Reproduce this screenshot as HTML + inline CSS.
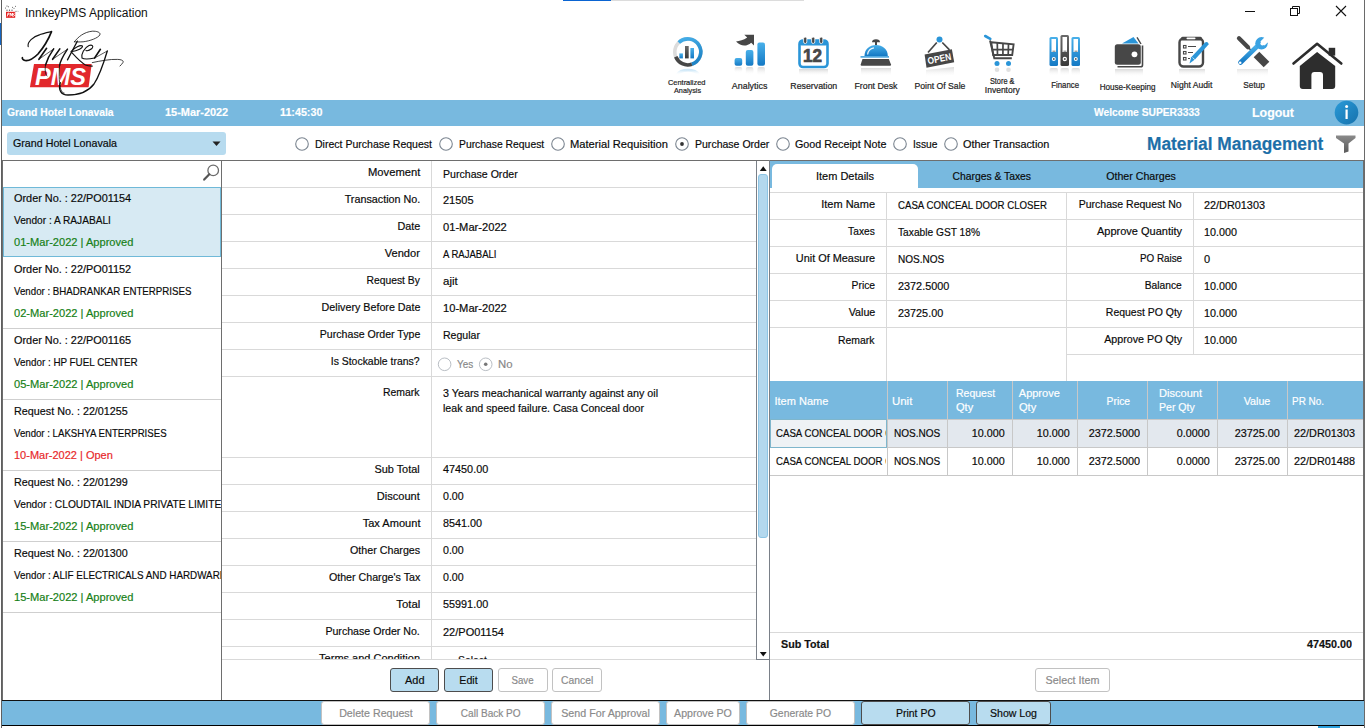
<!DOCTYPE html><html><head><meta charset="utf-8"><style>
html,body{margin:0;padding:0;}
body{width:1366px;height:728px;position:relative;overflow:hidden;background:#fff;font-family:"Liberation Sans",sans-serif;}
.t{position:absolute;line-height:1;white-space:nowrap;-webkit-text-stroke-width:0.18px;}
</style></head><body>
<div style="position:absolute;left:1px;top:0px;width:1px;height:728px;background:#5f5f5f"></div>
<div style="position:absolute;left:1364px;top:0px;width:1px;height:728px;background:#6a6a6a"></div>
<div style="position:absolute;left:0px;top:23px;width:1px;height:22px;background:#1565c0"></div>
<div style="position:absolute;left:563px;top:0px;width:48px;height:1px;background:#0a64d2"></div>
<div style="position:absolute;left:611px;top:0px;width:193px;height:1px;background:#dcdcdc"></div>
<svg style="position:absolute;left:0px;top:0px" width="22" height="22" viewBox="0 0 22 22">
<g fill="#444"><circle cx="5.5" cy="8" r="0.5"/><circle cx="7" cy="6" r="0.6"/><circle cx="8.5" cy="6.8" r="0.5"/><circle cx="12.5" cy="7.3" r="0.5"/><circle cx="15.5" cy="6.3" r="0.5"/><circle cx="14" cy="8.3" r="0.5"/><circle cx="7" cy="10.2" r="0.6"/><circle cx="9.5" cy="10.2" r="0.6"/><circle cx="12" cy="10.2" r="0.6"/><circle cx="16" cy="11.5" r="0.5"/></g>
<path d="M15.5,11 L19,11.5" stroke="#bbb" stroke-width="0.6"/>
<rect x="6" y="11.8" width="9.2" height="6" fill="#e3201f"/>
<path d="M7.2,16.5 L8,13 L9.3,13.5 L8.5,15 M10,16.5 L10.5,13 L11.5,15.5 L12.5,13 L12.6,16.5 M14.6,13.2 L13.2,14.2 L14.6,15.4 L13.2,16.5" stroke="#fff" stroke-width="0.9" fill="none"/>
</svg>
<div class="t" style="left:25px;top:6.84px;font-size:12px;color:#111;-webkit-text-stroke-width:0;">InnkeyPMS Application</div>
<svg style="position:absolute;left:1240px;top:0px" width="115" height="24" viewBox="0 0 115 24">
<path d="M5 11.5h10" stroke="#111" stroke-width="1"/>
<rect x="50.5" y="8.5" width="7" height="7" fill="none" stroke="#111" stroke-width="1"/>
<path d="M52.5 8.5v-2h7v7h-2" fill="none" stroke="#111" stroke-width="1"/>
<path d="M96 6l10 10M106 6l-10 10" stroke="#111" stroke-width="1.1"/>
</svg>
<svg style="position:absolute;left:0;top:0" width="1366" height="100" viewBox="0 0 1366 100">
<defs>
<linearGradient id="gb" x1="0" y1="0" x2="0" y2="1"><stop offset="0" stop-color="#49b0ea"/><stop offset="1" stop-color="#1479c4"/></linearGradient>
<linearGradient id="gd" x1="0" y1="0" x2="0" y2="1"><stop offset="0" stop-color="#6a6a6a"/><stop offset="1" stop-color="#3a3a3a"/></linearGradient>
<linearGradient id="rf" x1="0" y1="0" x2="0" y2="1"><stop offset="0" stop-color="#c9c9c9" stop-opacity="0.7"/><stop offset="1" stop-color="#fff" stop-opacity="0"/></linearGradient>
<linearGradient id="rfb" x1="0" y1="0" x2="0" y2="1"><stop offset="0" stop-color="#a9d6f2" stop-opacity="0.8"/><stop offset="1" stop-color="#fff" stop-opacity="0"/></linearGradient>
<linearGradient id="gring" x1="0" y1="0" x2="0.3" y2="1"><stop offset="0" stop-color="#45aee8"/><stop offset="1" stop-color="#1f84c6"/></linearGradient>
<linearGradient id="gfun" x1="0" y1="0" x2="0" y2="1"><stop offset="0" stop-color="#8a8a8a"/><stop offset="1" stop-color="#5a5a5a"/></linearGradient>
</defs>
<!-- logo -->
<polygon points="34,64 91.7,64 88.6,87.3 29.9,87.3" fill="#e2282c"/>
<text x="35" y="84.7" font-family="Liberation Sans" font-weight="bold" font-style="italic" font-size="23.5" fill="#fff" textLength="51" lengthAdjust="spacingAndGlyphs">PMS</text>
<g fill="none" stroke="#111" stroke-linecap="round" stroke-linejoin="round">
<path d="M28.2,46.7 C27,42 33,36.5 40,34.6 C45,33 49,32 51.5,31.6" stroke-width="1.1"/>
<path d="M51.5,31.6 C49,38 44,47 38,54 C33,59 28,61 25,60.5 C23,60 22,58.5 22.4,57.7" stroke-width="1.7"/>
<path d="M46.6,48.3 L38.9,59.3 M59.8,48.9 L52.6,59.3" stroke-width="1.6"/>
<path d="M38.9,59.3 L53.7,48.9 M52.6,59.3 L67.5,49.2 M94.6,58 L107.3,51" stroke-width="0.7"/>
<path d="M53.7,48.9 C50,54 47,60 45.5,65" stroke-width="1.5"/><path d="M45.5,65 C44.5,72 46,75 47,76" stroke-width="0.8"/>
<path d="M67.5,49.2 C63,56 60,62 59.5,66" stroke-width="1.4"/><path d="M59.5,66 C59,76 59,84 61,90 C62,92 63,93 64,93" stroke-width="0.8"/>
<path d="M77.3,41.2 L67.5,59.9" stroke-width="1.3"/>
<path d="M74.4,41.8 C78,37 84,32 92.3,31.2 C98,31 101,33 99.8,35 C98,38 90,41 83.1,41.8 C79,42 76,42 74.4,41.8" stroke-width="0.8"/>
<path d="M71,51.7 C75,47 80,45 82.5,45.9 C83,48 78,50.5 71,51.7 C75,56 80,62 85.4,64.9 C88,66 90,66 92.3,66.1" stroke-width="1.1"/>
<path d="M94.6,58 C90,59 84,59.5 82,58 C81,54 84,48 89,45.5 C92,44.5 94,46 92,48.5 C90,50 87,51 86,50.5" stroke-width="1.1"/>
<path d="M100.4,49.3 L94.6,58" stroke-width="1.6"/>
<path d="M107.3,51 C104,62 100,75 94,84 C88,92 78,95 68,95 C61,95 58,90 60.3,82.7" stroke-width="1.3"/>
<path d="M92.3,62.6 C100,61 110,59 117.7,59.4 C122,59.5 124,61 122.9,62.6 C122,64 121,65 120,66" stroke-width="0.8"/>
</g>
<!-- 1 centralized analysis -->
<circle cx="687.8" cy="51.9" r="13" fill="none" stroke="#dcdcdc" stroke-width="3.6"/>
<path d="M678.77,42.55 A13,13 0 1 1 691.8,64.27" fill="none" stroke="url(#gring)" stroke-width="3.6"/>
<path d="M691.8,64.27 A13,13 0 0 1 675.75,56.77" fill="none" stroke="#474747" stroke-width="3.6"/>
<rect x="679.3" y="53.4" width="3.6" height="5" fill="url(#gb)"/>
<rect x="685" y="46" width="3.7" height="12.4" fill="url(#gd)"/>
<rect x="690.4" y="48" width="3.6" height="10.4" fill="url(#gb)"/>
<path d="M677,75 A12,8 0 0 1 699,75" fill="none" stroke="url(#rfb)" stroke-width="3" opacity="0.7"/>
<!-- 2 analytics -->
<rect x="734.6" y="58" width="7.6" height="7.7" rx="2" fill="url(#gb)"/>
<rect x="745.8" y="50" width="7.6" height="15.7" rx="2" fill="url(#gb)"/>
<rect x="757.4" y="42.5" width="7.6" height="23.2" rx="2" fill="url(#gb)"/>
<rect x="734.6" y="67" width="7.6" height="6" rx="2" fill="url(#rf)"/><rect x="745.8" y="67" width="7.6" height="8" rx="2" fill="url(#rf)"/><rect x="757.4" y="67" width="7.6" height="9" rx="2" fill="url(#rf)"/>
<path d="M736,41.6 C739.5,41.2 743.5,40.3 747.2,37.6 L744.3,34.8 L754,34.8 L754,45.6 L751.2,42.8 C747,46.5 741,47 736,41.6 Z" fill="#474747"/>
<!-- 3 reservation -->
<rect x="799.5" y="40.5" width="28" height="26.5" rx="3.5" fill="#fff" stroke="#2a95d8" stroke-width="2.6"/>
<rect x="799.5" y="40.5" width="28" height="5" rx="2" fill="#2a95d8"/>
<g fill="#474747" stroke="#fff" stroke-width="0.8"><rect x="803.6" y="37" width="3.2" height="6.5" rx="1.6"/><rect x="811.6" y="37" width="3.2" height="6.5" rx="1.6"/><rect x="819.6" y="37" width="3.2" height="6.5" rx="1.6"/></g>
<text x="812.6" y="62.2" text-anchor="middle" font-family="Liberation Sans" font-weight="bold" font-size="17.5" fill="#474747" stroke="#474747" stroke-width="0.7" textLength="19" lengthAdjust="spacingAndGlyphs">12</text>
<rect x="799" y="69" width="29" height="7" fill="url(#rf)"/>
<!-- 4 front desk bell -->
<path d="M872,42.3 Q872,39.2 876,39.2 Q880,39.2 880,42.3 Z" fill="#474747"/>
<rect x="875" y="41.5" width="2" height="4" fill="#474747"/>
<path d="M864.5,56 C864.5,49 869.5,45 876,45 C882.5,45 887.8,49 887.8,56 Z" fill="url(#gb)"/>
<path d="M867.6,54.5 C868,50.8 870.5,48.3 874,47.8" fill="none" stroke="#fff" stroke-width="1.2" opacity="0.9"/>
<rect x="860.5" y="56.2" width="28.5" height="1.4" fill="#2a95d8"/>
<path d="M862.5,59 L888.8,59 L891,64.5 Q891.2,65.8 890,65.8 L861.7,65.8 Q860.5,65.8 860.7,64.5 Z" fill="#474747"/>
<rect x="861" y="68" width="30" height="8" fill="url(#rf)"/>
<!-- 5 point of sale -->
<circle cx="939.5" cy="39.6" r="3" fill="#2a95d8"/>
<path d="M936.8,42.5 L928,52.5 M942.3,42.5 L949.5,49.8" stroke="#474747" stroke-width="1.7"/>
<polygon points="924.6,54.6 951.9,49.2 954.2,62.3 926.5,67.7" fill="#474747"/>
<text x="0" y="0" transform="translate(928.2,64.2) rotate(-11.5)" font-family="Liberation Sans" font-weight="bold" font-size="9.5" fill="#fff" textLength="24" lengthAdjust="spacingAndGlyphs">OPEN</text>
<polygon points="926,70 954,67 954,75 926,77" fill="url(#rf)"/>
<!-- 6 store cart -->
<path d="M985.2,36 L990.3,38.8" stroke="#2a95d8" stroke-width="2.6" stroke-linecap="round"/>
<path d="M990,40.5 L994.3,58.3 L1011.8,58.3" fill="none" stroke="#474747" stroke-width="1.9"/>
<path d="M991.2,42.3 L1013.6,44.4 L1012.2,55 L993.2,55 Z" fill="none" stroke="#474747" stroke-width="1.9"/>
<path d="M997.3,43 L997.5,55 M1003,43.5 L1002.9,55 M1008.5,44 L1008.2,55 M992.3,49.6 L1013,49.6" stroke="#474747" stroke-width="1.7"/>
<circle cx="997" cy="63.6" r="2.5" fill="#2a95d8"/>
<circle cx="1008.5" cy="63.6" r="2.5" fill="#2a95d8"/>
<circle cx="997" cy="69.8" r="2.3" fill="#d8d8d8" opacity="0.8"/>
<circle cx="1008.5" cy="69.8" r="2.3" fill="#d8d8d8" opacity="0.8"/>
<!-- 7 finance binders -->
<rect x="1049.5" y="37" width="8.5" height="29" rx="1.5" fill="url(#gb)"/>
<rect x="1060.5" y="35" width="8.5" height="31" rx="1.5" fill="url(#gd)"/>
<rect x="1071.5" y="37" width="8.5" height="29" rx="1.5" fill="url(#gb)"/>
<rect x="1051.5" y="39" width="4.5" height="13" fill="#fff"/>
<rect x="1062.5" y="37" width="4.5" height="15" fill="#fff"/>
<rect x="1073.5" y="39" width="4.5" height="13" fill="#fff"/>
<circle cx="1053.8" cy="59" r="2" fill="#fff"/><circle cx="1064.8" cy="59" r="2.2" fill="#fff"/><circle cx="1075.8" cy="59" r="2" fill="#fff"/>
<circle cx="1053.8" cy="59" r="0.9" fill="#555"/><circle cx="1064.8" cy="59" r="1" fill="#555"/><circle cx="1075.8" cy="59" r="0.9" fill="#555"/>
<path d="M1052.5,51.2h3 M1063.5,51.2h3 M1074.5,51.2h3" stroke="#555" stroke-width="0.8"/>
<rect x="1049.5" y="68" width="8.5" height="8" rx="2" fill="url(#rf)"/><rect x="1060.5" y="68" width="8.5" height="8" rx="2" fill="url(#rf)"/><rect x="1071.5" y="68" width="8.5" height="8" rx="2" fill="url(#rf)"/>
<!-- 8 housekeeping wallet -->
<polygon points="1122,43.5 1133.5,37 1138.5,43.5" fill="#2a95d8"/>
<path d="M1137,37.3 L1141,44" stroke="#474747" stroke-width="1.4"/>
<path d="M1142.5,45.5 L1142.5,65 Q1142.5,66.8 1140.7,66.8 L1117.5,66.8" fill="none" stroke="#474747" stroke-width="1.6"/>
<rect x="1114.8" y="44.2" width="26" height="20.5" rx="2.5" fill="#474747"/>
<circle cx="1134.5" cy="54.3" r="2.9" fill="#fff"/>
<rect x="1115" y="69" width="28" height="8" fill="url(#rf)"/>
<!-- 9 night audit -->
<rect x="1179.5" y="38.5" width="23.5" height="28" rx="4" fill="#fff" stroke="#474747" stroke-width="2.4"/>
<rect x="1181" y="36.8" width="21" height="3.6" rx="1.5" fill="#474747"/><rect x="1186.5" y="37.6" width="9" height="1.6" rx="0.8" fill="#fff"/>
<g fill="none" stroke="#474747" stroke-width="1.1"><rect x="1183.5" y="45.5" width="2.5" height="2.5"/><rect x="1183.5" y="51.5" width="2.5" height="2.5"/><rect x="1183.5" y="57.5" width="2.5" height="2.5"/>
<path d="M1188,46.5h8 M1188,52.5h5 M1188,58.5h2"/></g>
<path d="M1189.5,63.5 L1191.2,57.3 L1205,42.5 Q1207.8,41.2 1208.8,44.2 L1195.2,59.3 Z" fill="#2a95d8"/><path d="M1192.5,57.5 L1195,59.8" stroke="#fff" stroke-width="0.7"/>
<rect x="1179" y="69" width="26" height="7" fill="url(#rf)"/>
<!-- 10 setup -->
<path d="M1239,38.3 L1248,47.3" stroke="#474747" stroke-width="4.3" stroke-linecap="round"/>
<path d="M1248,47.3 L1252,51.3" stroke="#474747" stroke-width="1.6"/>
<path d="M1256.5,54.5 L1266.5,64.5" stroke="#474747" stroke-width="8" stroke-linecap="butt" stroke-linejoin="round"/>
<path d="M1240.5,62.5 L1258,45.5" stroke="url(#gb)" stroke-width="4.6" stroke-linecap="round"/>
<circle cx="1261.5" cy="43.3" r="6.2" fill="#3aa2e2"/>
<path d="M1260.4,41.4 L1266.4,35.4 L1270.6,39.6 L1264.6,45.6 Z" fill="#fff"/><circle cx="1262.5" cy="43.5" r="2.1" fill="#fff"/>
<circle cx="1240.2" cy="62.8" r="1.3" fill="#fff"/>
<rect x="1237" y="69" width="31" height="8" fill="url(#rf)" opacity="0.7"/>
<!-- 11 home -->
<path d="M1293.5,63.5 L1317.1,43.8 L1341.3,63.5" fill="none" stroke="#2d2d2d" stroke-width="2.6" stroke-linecap="round" stroke-linejoin="round"/>
<rect x="1328.7" y="47.8" width="6.5" height="7.8" fill="#2d2d2d"/>
<path d="M1317.1,51.9 L1335.2,65.9 L1335.2,86 Q1335.2,89 1332.2,89 L1323,89 L1323,75 Q1323,72 1320,72 L1314.4,72 Q1311.4,72 1311.4,75 L1311.4,89 L1302.8,89 Q1299.8,89 1299.8,86 L1299.8,65.9 Z" fill="#2d2d2d"/>
</svg>
<div class="t" style="left:667.27px;top:78.70px;font-size:7.8px;color:#1e1e1e;transform:scaleX(0.9505);transform-origin:center 0;-webkit-text-stroke:0.2px #1e1e1e;">Centralized</div>
<div class="t" style="left:672.98px;top:86.50px;font-size:7.8px;color:#1e1e1e;transform:scaleX(0.9296);transform-origin:center 0;-webkit-text-stroke:0.2px #1e1e1e;">Analysis</div>
<div class="t" style="left:732.39px;top:81.85px;font-size:8.8px;color:#1e1e1e;transform:scaleX(1.0081);transform-origin:center 0;-webkit-text-stroke:0.2px #1e1e1e;">Analytics</div>
<div class="t" style="left:790.32px;top:81.85px;font-size:8.8px;color:#1e1e1e;-webkit-text-stroke:0.2px #1e1e1e;">Reservation</div>
<div class="t" style="left:854.48px;top:81.65px;font-size:8.8px;color:#1e1e1e;-webkit-text-stroke:0.2px #1e1e1e;">Front Desk</div>
<div class="t" style="left:914.37px;top:81.85px;font-size:8.8px;color:#1e1e1e;transform:scaleX(0.9836);transform-origin:center 0;-webkit-text-stroke:0.2px #1e1e1e;">Point Of Sale</div>
<div class="t" style="left:988.13px;top:77.10px;font-size:8.5px;color:#1e1e1e;transform:scaleX(0.8643);transform-origin:center 0;-webkit-text-stroke:0.2px #1e1e1e;">Store &amp;</div>
<div class="t" style="left:984.82px;top:85.80px;font-size:8.5px;color:#1e1e1e;-webkit-text-stroke:0.2px #1e1e1e;">Inventory</div>
<div class="t" style="left:1050.38px;top:81.10px;font-size:8.5px;color:#1e1e1e;transform:scaleX(0.9193);transform-origin:center 0;-webkit-text-stroke:0.2px #1e1e1e;">Finance</div>
<div class="t" style="left:1098.36px;top:82.72px;font-size:8.6px;color:#1e1e1e;transform:scaleX(0.9446);transform-origin:center 0;-webkit-text-stroke:0.2px #1e1e1e;">House-Keeping</div>
<div class="t" style="left:1170.94px;top:81.40px;font-size:8.5px;color:#1e1e1e;transform:scaleX(1.0095);transform-origin:center 0;-webkit-text-stroke:0.2px #1e1e1e;">Night Audit</div>
<div class="t" style="left:1243.19px;top:81.40px;font-size:8.5px;color:#1e1e1e;transform:scaleX(0.9679);transform-origin:center 0;-webkit-text-stroke:0.2px #1e1e1e;">Setup</div>
<div style="position:absolute;left:2px;top:100px;width:1362px;height:26px;background:#78b9df"></div>
<div class="t" style="left:7px;top:106.69px;font-size:11px;color:#fff;font-weight:bold;transform:scaleX(0.9376);transform-origin:left 0;">Grand Hotel Lonavala</div>
<div class="t" style="left:164.6px;top:106.69px;font-size:11px;color:#fff;font-weight:bold;transform:scaleX(0.9938);transform-origin:left 0;">15-Mar-2022</div>
<div class="t" style="left:279.6px;top:106.69px;font-size:11px;color:#fff;font-weight:bold;transform:scaleX(0.9763);transform-origin:left 0;">11:45:30</div>
<div class="t" style="left:1094.2px;top:106.69px;font-size:11px;color:#fff;font-weight:bold;transform:scaleX(0.9320);transform-origin:left 0;">Welcome SUPER3333</div>
<div class="t" style="left:1251.7px;top:107.42px;font-size:12.5px;color:#fff;font-weight:bold;transform:scaleX(0.9919);transform-origin:left 0;">Logout</div>
<svg style="position:absolute;left:1334px;top:100px" width="25" height="25" viewBox="0 0 25 25">
<defs><linearGradient id="gi" x1="0" y1="0" x2="1" y2="1"><stop offset="0" stop-color="#2a9ad8"/><stop offset="1" stop-color="#1672ad"/></linearGradient></defs>
<circle cx="12.5" cy="12.6" r="11.8" fill="url(#gi)"/>
<circle cx="12.6" cy="6.4" r="1.5" fill="#fff"/><rect x="11.5" y="9.5" width="2.2" height="9.5" fill="#fff"/></svg>
<div style="position:absolute;left:7px;top:132px;width:219px;height:23px;background:#b7dbef;border-radius:3px"></div>
<div class="t" style="left:13px;top:137.69px;font-size:11px;color:#0a0a0a;transform:scaleX(0.9718);transform-origin:left 0;">Grand Hotel Lonavala</div>
<svg style="position:absolute;left:212px;top:141px" width="10" height="6"><path d="M0.5,0.5 L8.5,0.5 L4.5,5 Z" fill="#222"/></svg>
<svg style="position:absolute;left:0;top:0" width="1366" height="160"><circle cx="302" cy="144" r="6.3" fill="#fff" stroke="#7b8590" stroke-width="1.1"/><circle cx="446" cy="144" r="6.3" fill="#fff" stroke="#7b8590" stroke-width="1.1"/><circle cx="558" cy="144" r="6.3" fill="#fff" stroke="#7b8590" stroke-width="1.1"/><circle cx="682" cy="144" r="6.3" fill="#fff" stroke="#7b8590" stroke-width="1.1"/><circle cx="682" cy="144" r="1.9" fill="#333"/><circle cx="783" cy="144" r="6.3" fill="#fff" stroke="#7b8590" stroke-width="1.1"/><circle cx="900" cy="144" r="6.3" fill="#fff" stroke="#7b8590" stroke-width="1.1"/><circle cx="951" cy="144" r="6.3" fill="#fff" stroke="#7b8590" stroke-width="1.1"/></svg>
<div class="t" style="left:315px;top:138.69px;font-size:11px;color:#0a0a0a;transform:scaleX(0.9568);transform-origin:left 0;">Direct Purchase Request</div>
<div class="t" style="left:458.6px;top:138.69px;font-size:11px;color:#0a0a0a;transform:scaleX(0.9414);transform-origin:left 0;">Purchase Request</div>
<div class="t" style="left:570px;top:138.69px;font-size:11px;color:#0a0a0a;transform:scaleX(1.0145);transform-origin:left 0;">Material Requisition</div>
<div class="t" style="left:694.7px;top:138.69px;font-size:11px;color:#0a0a0a;transform:scaleX(0.9569);transform-origin:left 0;">Purchase Order</div>
<div class="t" style="left:795.3px;top:138.69px;font-size:11px;color:#0a0a0a;transform:scaleX(0.9780);transform-origin:left 0;">Good Receipt Note</div>
<div class="t" style="left:913px;top:138.69px;font-size:11px;color:#0a0a0a;transform:scaleX(0.9319);transform-origin:left 0;">Issue</div>
<div class="t" style="left:963px;top:138.69px;font-size:11px;color:#0a0a0a;transform:scaleX(0.9882);transform-origin:left 0;">Other Transaction</div>
<div class="t" style="left:1146.6px;top:134.76px;font-size:18px;color:#1d6fa8;font-weight:bold;transform:scaleX(0.9631);transform-origin:left 0;">Material Management</div>
<svg style="position:absolute;left:1335px;top:134px" width="22" height="20" viewBox="0 0 22 20">
<path d="M1,1.5 L20.5,1.5 L20.5,4 L13.5,9.5 L13.5,17.5 L9,19 L9,9.5 L1,4 Z" fill="url(#gfun)"/></svg>
<div style="position:absolute;left:2px;top:160px;width:1362px;height:1px;background:#6e6e6e"></div>
<div style="position:absolute;left:2px;top:160px;width:1px;height:540px;background:#6e6e6e"></div>
<div style="position:absolute;left:221px;top:160px;width:1px;height:540px;background:#6e6e6e"></div>
<div style="position:absolute;left:769px;top:160px;width:1px;height:540px;background:#7a8088"></div>
<div style="position:absolute;left:1363px;top:160px;width:1px;height:540px;background:#6e6e6e"></div>
<svg style="position:absolute;left:202px;top:163px" width="18" height="20" viewBox="0 0 18 20">
<circle cx="11.2" cy="7.4" r="5.3" fill="#fff" stroke="#6b6b6b" stroke-width="1.3"/>
<path d="M7.3,11.3 L2.2,16.6" stroke="#555" stroke-width="2.2" stroke-linecap="round"/></svg>
<div style="position:absolute;left:3px;top:187px;width:218px;height:70px;background:#d7eaf3;border:1px solid #6fb9d8;box-sizing:border-box"></div>
<div style="position:absolute;left:3px;top:187px;width:218px;height:460px;overflow:hidden">
<div class="t" style="left:11px;top:5.69px;font-size:11px;color:#0a0a0a;transform:scaleX(0.9891);transform-origin:left 0;">Order No. : 22/PO01154</div>
<div class="t" style="left:11px;top:27.69px;font-size:11px;color:#0a0a0a;transform:scaleX(0.9209);transform-origin:left 0;">Vendor : A RAJABALI</div>
<div class="t" style="left:11px;top:49.69px;font-size:11px;color:#168016;transform:scaleX(1.0082);transform-origin:left 0;">01-Mar-2022 | Approved</div>
<div class="t" style="left:11px;top:76.69px;font-size:11px;color:#0a0a0a;transform:scaleX(0.9891);transform-origin:left 0;">Order No. : 22/PO01152</div>
<div class="t" style="left:11px;top:98.69px;font-size:11px;color:#0a0a0a;transform:scaleX(0.8823);transform-origin:left 0;">Vendor : BHADRANKAR ENTERPRISES</div>
<div class="t" style="left:11px;top:120.69px;font-size:11px;color:#168016;transform:scaleX(1.0082);transform-origin:left 0;">02-Mar-2022 | Approved</div>
<div class="t" style="left:11px;top:147.69px;font-size:11px;color:#0a0a0a;transform:scaleX(0.9891);transform-origin:left 0;">Order No. : 22/PO01165</div>
<div class="t" style="left:11px;top:169.69px;font-size:11px;color:#0a0a0a;transform:scaleX(0.8945);transform-origin:left 0;">Vendor : HP FUEL CENTER</div>
<div class="t" style="left:11px;top:191.69px;font-size:11px;color:#168016;transform:scaleX(1.0082);transform-origin:left 0;">05-Mar-2022 | Approved</div>
<div class="t" style="left:11px;top:218.69px;font-size:11px;color:#0a0a0a;transform:scaleX(0.9797);transform-origin:left 0;">Request No. : 22/01255</div>
<div class="t" style="left:11px;top:240.69px;font-size:11px;color:#0a0a0a;transform:scaleX(0.8766);transform-origin:left 0;">Vendor : LAKSHYA ENTERPRISES</div>
<div class="t" style="left:11px;top:262.69px;font-size:11px;color:#e8282a;">10-Mar-2022 | Open</div>
<div class="t" style="left:11px;top:289.69px;font-size:11px;color:#0a0a0a;transform:scaleX(0.9797);transform-origin:left 0;">Request No. : 22/01299</div>
<div class="t" style="left:11px;top:311.69px;font-size:11px;color:#0a0a0a;transform:scaleX(0.9280);transform-origin:left 0;">Vendor : CLOUDTAIL INDIA PRIVATE LIMITED</div>
<div class="t" style="left:11px;top:333.69px;font-size:11px;color:#168016;transform:scaleX(1.0082);transform-origin:left 0;">15-Mar-2022 | Approved</div>
<div class="t" style="left:11px;top:360.69px;font-size:11px;color:#0a0a0a;transform:scaleX(0.9797);transform-origin:left 0;">Request No. : 22/01300</div>
<div class="t" style="left:11px;top:382.69px;font-size:11px;color:#0a0a0a;transform:scaleX(0.8944);transform-origin:left 0;">Vendor : ALIF ELECTRICALS AND HARDWARE</div>
<div class="t" style="left:11px;top:404.69px;font-size:11px;color:#168016;transform:scaleX(1.0082);transform-origin:left 0;">15-Mar-2022 | Approved</div>
</div>
<div style="position:absolute;left:3px;top:328px;width:218px;height:1px;background:#cfcfcf"></div>
<div style="position:absolute;left:3px;top:399px;width:218px;height:1px;background:#cfcfcf"></div>
<div style="position:absolute;left:3px;top:470px;width:218px;height:1px;background:#cfcfcf"></div>
<div style="position:absolute;left:3px;top:541px;width:218px;height:1px;background:#cfcfcf"></div>
<div style="position:absolute;left:3px;top:612px;width:218px;height:1px;background:#cfcfcf"></div>
<div style="position:absolute;left:222px;top:161px;width:534px;height:498px;overflow:hidden">
<div class="t" style="left:146.65px;top:5.69px;font-size:11px;color:#0a0a0a;transform:scaleX(1.0197);transform-origin:right 0;">Movement</div>
<div class="t" style="left:221px;top:7.69px;font-size:11px;color:#0a0a0a;transform:scaleX(0.9619);transform-origin:left 0;">Purchase Order</div>
<div style="position:absolute;left:0px;top:26px;width:534px;height:1px;background:#d9d9d9"></div>
<div class="t" style="left:120.76px;top:32.69px;font-size:11px;color:#0a0a0a;transform:scaleX(0.9786);transform-origin:right 0;">Transaction No.</div>
<div class="t" style="left:221px;top:33.69px;font-size:11px;color:#0a0a0a;">21505</div>
<div style="position:absolute;left:0px;top:53px;width:534px;height:1px;background:#d9d9d9"></div>
<div class="t" style="left:174.76px;top:59.69px;font-size:11px;color:#0a0a0a;transform:scaleX(0.9823);transform-origin:right 0;">Date</div>
<div class="t" style="left:221px;top:60.69px;font-size:11px;color:#0a0a0a;transform:scaleX(1.0129);transform-origin:left 0;">01-Mar-2022</div>
<div style="position:absolute;left:0px;top:80px;width:534px;height:1px;background:#d9d9d9"></div>
<div class="t" style="left:163.13px;top:86.69px;font-size:11px;color:#0a0a0a;transform:scaleX(1.0091);transform-origin:right 0;">Vendor</div>
<div class="t" style="left:221px;top:87.69px;font-size:11px;color:#0a0a0a;transform:scaleX(0.8667);transform-origin:left 0;">A RAJABALI</div>
<div style="position:absolute;left:0px;top:107px;width:534px;height:1px;background:#d9d9d9"></div>
<div class="t" style="left:141.14px;top:113.69px;font-size:11px;color:#0a0a0a;transform:scaleX(0.9376);transform-origin:right 0;">Request By</div>
<div class="t" style="left:221px;top:114.69px;font-size:11px;color:#0a0a0a;transform:scaleX(1.0432);transform-origin:left 0;">ajit</div>
<div style="position:absolute;left:0px;top:134px;width:534px;height:1px;background:#d9d9d9"></div>
<div class="t" style="left:96.51px;top:140.69px;font-size:11px;color:#0a0a0a;transform:scaleX(0.9744);transform-origin:right 0;">Delivery Before Date</div>
<div class="t" style="left:221px;top:141.69px;font-size:11px;color:#0a0a0a;transform:scaleX(1.0129);transform-origin:left 0;">10-Mar-2022</div>
<div style="position:absolute;left:0px;top:161px;width:534px;height:1px;background:#d9d9d9"></div>
<div class="t" style="left:93.65px;top:167.69px;font-size:11px;color:#0a0a0a;transform:scaleX(0.9637);transform-origin:right 0;">Purchase Order Type</div>
<div class="t" style="left:221px;top:168.69px;font-size:11px;color:#0a0a0a;transform:scaleX(0.9591);transform-origin:left 0;">Regular</div>
<div style="position:absolute;left:0px;top:188px;width:534px;height:1px;background:#d9d9d9"></div>
<div class="t" style="left:104.45px;top:194.69px;font-size:11px;color:#0a0a0a;transform:scaleX(0.9495);transform-origin:right 0;">Is Stockable trans?</div>
<div style="position:absolute;left:0px;top:215px;width:534px;height:1px;background:#d9d9d9"></div>
<div class="t" style="left:159.49px;top:225.69px;font-size:11px;color:#0a0a0a;transform:scaleX(0.9480);transform-origin:right 0;">Remark</div>
<div class="t" style="left:221px;top:226.69px;font-size:11px;color:#0a0a0a;transform:scaleX(0.9768);transform-origin:left 0;">3 Years meachanical warranty against any oil</div>
<div class="t" style="left:221px;top:241.69px;font-size:11px;color:#0a0a0a;transform:scaleX(0.9668);transform-origin:left 0;">leak and speed failure. Casa Conceal door</div>
<div style="position:absolute;left:0px;top:296px;width:534px;height:1px;background:#d9d9d9"></div>
<div class="t" style="left:152.33px;top:302.69px;font-size:11px;color:#0a0a0a;transform:scaleX(0.9908);transform-origin:right 0;">Sub Total</div>
<div class="t" style="left:221px;top:302.69px;font-size:11px;color:#0a0a0a;transform:scaleX(0.9849);transform-origin:left 0;">47450.00</div>
<div style="position:absolute;left:0px;top:323px;width:534px;height:1px;background:#d9d9d9"></div>
<div class="t" style="left:155.20px;top:329.69px;font-size:11px;color:#0a0a0a;transform:scaleX(1.0056);transform-origin:right 0;">Discount</div>
<div class="t" style="left:221px;top:329.69px;font-size:11px;color:#0a0a0a;transform:scaleX(0.9672);transform-origin:left 0;">0.00</div>
<div style="position:absolute;left:0px;top:350px;width:534px;height:1px;background:#d9d9d9"></div>
<div class="t" style="left:140.52px;top:356.69px;font-size:11px;color:#0a0a0a;transform:scaleX(1.0055);transform-origin:right 0;">Tax Amount</div>
<div class="t" style="left:221px;top:356.69px;font-size:11px;color:#0a0a0a;transform:scaleX(0.9825);transform-origin:left 0;">8541.00</div>
<div style="position:absolute;left:0px;top:377px;width:534px;height:1px;background:#d9d9d9"></div>
<div class="t" style="left:125.85px;top:383.69px;font-size:11px;color:#0a0a0a;transform:scaleX(0.9728);transform-origin:right 0;">Other Charges</div>
<div class="t" style="left:221px;top:383.69px;font-size:11px;color:#0a0a0a;transform:scaleX(0.9672);transform-origin:left 0;">0.00</div>
<div style="position:absolute;left:0px;top:404px;width:534px;height:1px;background:#d9d9d9"></div>
<div class="t" style="left:103.78px;top:410.69px;font-size:11px;color:#0a0a0a;transform:scaleX(0.9688);transform-origin:right 0;">Other Charge&#x27;s Tax</div>
<div class="t" style="left:221px;top:410.69px;font-size:11px;color:#0a0a0a;transform:scaleX(0.9672);transform-origin:left 0;">0.00</div>
<div style="position:absolute;left:0px;top:431px;width:534px;height:1px;background:#d9d9d9"></div>
<div class="t" style="left:174.76px;top:437.69px;font-size:11px;color:#0a0a0a;transform:scaleX(1.0325);transform-origin:right 0;">Total</div>
<div class="t" style="left:221px;top:437.69px;font-size:11px;color:#0a0a0a;transform:scaleX(0.9849);transform-origin:left 0;">55991.00</div>
<div style="position:absolute;left:0px;top:458px;width:534px;height:1px;background:#d9d9d9"></div>
<div class="t" style="left:100.18px;top:464.69px;font-size:11px;color:#0a0a0a;transform:scaleX(0.9655);transform-origin:right 0;">Purchase Order No.</div>
<div class="t" style="left:221px;top:465.69px;font-size:11px;color:#0a0a0a;">22/PO01154</div>
<div style="position:absolute;left:0px;top:485px;width:534px;height:1px;background:#d9d9d9"></div>
<div class="t" style="left:97.11px;top:491.69px;font-size:11px;color:#0a0a0a;">Terms and Condition</div>
<div class="t" style="left:236px;top:493.69px;font-size:11px;color:#0a0a0a;transform:scaleX(0.9435);transform-origin:left 0;">Select</div>
<div style="position:absolute;left:0px;top:512px;width:534px;height:1px;background:#d9d9d9"></div>
<div style="position:absolute;left:209px;top:0px;width:1px;height:498px;background:#d9d9d9"></div>
</div>
<svg style="position:absolute;left:436px;top:356px" width="80" height="17"><circle cx="8.6" cy="8.3" r="6.3" fill="#fff" stroke="#b9bec4" stroke-width="1"/>
<circle cx="49.7" cy="8.3" r="6.3" fill="#fff" stroke="#b9bec4" stroke-width="1"/><circle cx="49.7" cy="8.3" r="1.8" fill="#777"/></svg>
<div class="t" style="left:456.6px;top:358.69px;font-size:11px;color:#888;transform:scaleX(0.9034);transform-origin:left 0;">Yes</div>
<div class="t" style="left:497.8px;top:358.69px;font-size:11px;color:#888;transform:scaleX(1.0316);transform-origin:left 0;">No</div>
<div style="position:absolute;left:222px;top:659px;width:547px;height:1px;background:#d9d9d9"></div>
<div style="position:absolute;left:756px;top:161px;width:1px;height:498px;background:#7a8088"></div>
<div style="position:absolute;left:756px;top:659px;width:14px;height:1px;background:#7a8088"></div>
<div style="position:absolute;left:758px;top:174px;width:10px;height:364px;background:#b3d8ee;border:1px solid #8cc4e4;border-radius:3px;box-sizing:border-box"></div>
<svg style="position:absolute;left:759px;top:165px" width="9" height="7"><path d="M0.8,6 L7.7,6 L4.25,1.2 Z" fill="#111"/></svg>
<svg style="position:absolute;left:759px;top:651px" width="9" height="7"><path d="M0.8,1 L7.7,1 L4.25,5.6 Z" fill="#111"/></svg>
<div style="position:absolute;left:390px;top:668px;width:49px;height:24px;background:#b8dcef;border:1px solid #4d4d4d;border-radius:3px;box-sizing:border-box"></div>
<div class="t" style="left:404.71px;top:675.19px;font-size:11px;color:#0a0a0a;transform:scaleX(0.9946);transform-origin:center 0;">Add</div>
<div style="position:absolute;left:444px;top:668px;width:49px;height:24px;background:#b8dcef;border:1px solid #4d4d4d;border-radius:3px;box-sizing:border-box"></div>
<div class="t" style="left:459.02px;top:675.19px;font-size:11px;color:#0a0a0a;transform:scaleX(0.9634);transform-origin:center 0;">Edit</div>
<div style="position:absolute;left:498px;top:668px;width:50px;height:24px;background:#fff;border:1px solid #c2c2c2;border-radius:3px;box-sizing:border-box"></div>
<div class="t" style="left:510.46px;top:675.19px;font-size:11px;color:#8a8a8a;transform:scaleX(0.8849);transform-origin:center 0;">Save</div>
<div style="position:absolute;left:552px;top:668px;width:50px;height:24px;background:#fff;border:1px solid #c2c2c2;border-radius:3px;box-sizing:border-box"></div>
<div class="t" style="left:559.88px;top:675.19px;font-size:11px;color:#8a8a8a;transform:scaleX(0.9387);transform-origin:center 0;">Cancel</div>
<div style="position:absolute;left:770px;top:161px;width:593px;height:27px;background:#78b9df"></div>
<div style="position:absolute;left:772px;top:164px;width:146px;height:24px;background:#fff;border-radius:5px 5px 0 0"></div>
<div class="t" style="left:815.96px;top:170.69px;font-size:11px;color:#0a0a0a;">Item Details</div>
<div class="t" style="left:950.22px;top:170.69px;font-size:11px;color:#0a0a0a;transform:scaleX(0.9394);transform-origin:center 0;">Charges &amp; Taxes</div>
<div class="t" style="left:1104.93px;top:170.69px;font-size:11px;color:#0a0a0a;transform:scaleX(0.9661);transform-origin:center 0;">Other Charges</div>
<div style="position:absolute;left:770px;top:192px;width:593px;height:1px;background:#d9d9d9"></div>
<div style="position:absolute;left:770px;top:219px;width:593px;height:1px;background:#d9d9d9"></div>
<div style="position:absolute;left:770px;top:246px;width:593px;height:1px;background:#d9d9d9"></div>
<div style="position:absolute;left:770px;top:273px;width:593px;height:1px;background:#d9d9d9"></div>
<div style="position:absolute;left:770px;top:300px;width:593px;height:1px;background:#d9d9d9"></div>
<div style="position:absolute;left:770px;top:327px;width:593px;height:1px;background:#d9d9d9"></div>
<div style="position:absolute;left:1067px;top:354px;width:296px;height:1px;background:#d9d9d9"></div>
<div style="position:absolute;left:886px;top:192px;width:1px;height:189px;background:#d9d9d9"></div>
<div style="position:absolute;left:1066px;top:192px;width:1px;height:189px;background:#d9d9d9"></div>
<div style="position:absolute;left:1193px;top:192px;width:1px;height:162px;background:#d9d9d9"></div>
<div class="t" style="left:821.21px;top:198.69px;font-size:11px;color:#0a0a0a;">Item Name</div>
<div class="t" style="left:897.5px;top:199.69px;font-size:11px;color:#0a0a0a;transform:scaleX(0.8782);transform-origin:left 0;">CASA CONCEAL DOOR CLOSER</div>
<div class="t" style="left:846.26px;top:225.69px;font-size:11px;color:#0a0a0a;transform:scaleX(0.9266);transform-origin:right 0;">Taxes</div>
<div class="t" style="left:897.5px;top:226.69px;font-size:11px;color:#0a0a0a;transform:scaleX(0.9275);transform-origin:left 0;">Taxable GST 18%</div>
<div class="t" style="left:794.92px;top:252.69px;font-size:11px;color:#0a0a0a;transform:scaleX(0.9900);transform-origin:right 0;">Unit Of Measure</div>
<div class="t" style="left:897.5px;top:253.69px;font-size:11px;color:#0a0a0a;transform:scaleX(0.9120);transform-origin:left 0;">NOS.NOS</div>
<div class="t" style="left:849.94px;top:279.69px;font-size:11px;color:#0a0a0a;transform:scaleX(0.9361);transform-origin:right 0;">Price</div>
<div class="t" style="left:897.5px;top:280.69px;font-size:11px;color:#0a0a0a;transform:scaleX(0.9867);transform-origin:left 0;">2372.5000</div>
<div class="t" style="left:847.68px;top:306.69px;font-size:11px;color:#0a0a0a;transform:scaleX(0.9736);transform-origin:right 0;">Value</div>
<div class="t" style="left:897.5px;top:307.69px;font-size:11px;color:#0a0a0a;transform:scaleX(0.9849);transform-origin:left 0;">23725.00</div>
<div class="t" style="left:836.49px;top:334.69px;font-size:11px;color:#0a0a0a;transform:scaleX(0.9480);transform-origin:right 0;">Remark</div>
<div class="t" style="left:1074.38px;top:198.69px;font-size:11px;color:#0a0a0a;transform:scaleX(0.9567);transform-origin:right 0;">Purchase Request No</div>
<div class="t" style="left:1204px;top:199.69px;font-size:11px;color:#0a0a0a;transform:scaleX(0.9868);transform-origin:left 0;">22/DR01303</div>
<div class="t" style="left:1097.01px;top:225.69px;font-size:11px;color:#0a0a0a;">Approve Quantity</div>
<div class="t" style="left:1204px;top:226.69px;font-size:11px;color:#0a0a0a;transform:scaleX(0.9792);transform-origin:left 0;">10.000</div>
<div class="t" style="left:1134.93px;top:252.69px;font-size:11px;color:#0a0a0a;transform:scaleX(0.8953);transform-origin:right 0;">PO Raise</div>
<div class="t" style="left:1204px;top:253.69px;font-size:11px;color:#0a0a0a;">0</div>
<div class="t" style="left:1142.25px;top:279.69px;font-size:11px;color:#0a0a0a;transform:scaleX(0.9312);transform-origin:right 0;">Balance</div>
<div class="t" style="left:1204px;top:280.69px;font-size:11px;color:#0a0a0a;transform:scaleX(0.9792);transform-origin:left 0;">10.000</div>
<div class="t" style="left:1101.91px;top:306.69px;font-size:11px;color:#0a0a0a;transform:scaleX(0.9523);transform-origin:right 0;">Request PO Qty</div>
<div class="t" style="left:1204px;top:307.69px;font-size:11px;color:#0a0a0a;transform:scaleX(0.9792);transform-origin:left 0;">10.000</div>
<div class="t" style="left:1101.91px;top:333.69px;font-size:11px;color:#0a0a0a;transform:scaleX(0.9730);transform-origin:right 0;">Approve PO Qty</div>
<div class="t" style="left:1204px;top:334.69px;font-size:11px;color:#0a0a0a;transform:scaleX(0.9792);transform-origin:left 0;">10.000</div>
<div style="position:absolute;left:770px;top:381px;width:593px;height:38px;background:#78b9df"></div>
<div style="position:absolute;left:887px;top:381px;width:1px;height:94px;background:#c8c8c8"></div>
<div style="position:absolute;left:947px;top:381px;width:1px;height:94px;background:#c8c8c8"></div>
<div style="position:absolute;left:1012px;top:381px;width:1px;height:94px;background:#c8c8c8"></div>
<div style="position:absolute;left:1077px;top:381px;width:1px;height:94px;background:#c8c8c8"></div>
<div style="position:absolute;left:1147px;top:381px;width:1px;height:94px;background:#c8c8c8"></div>
<div style="position:absolute;left:1217px;top:381px;width:1px;height:94px;background:#c8c8c8"></div>
<div style="position:absolute;left:1287px;top:381px;width:1px;height:94px;background:#c8c8c8"></div>
<div style="position:absolute;left:770px;top:419px;width:593px;height:28px;background:#e3e8ee"></div>
<div style="position:absolute;left:770px;top:419px;width:593px;height:1px;background:#c8c8c8"></div>
<div style="position:absolute;left:770px;top:447px;width:593px;height:1px;background:#c8c8c8"></div>
<div style="position:absolute;left:770px;top:475px;width:593px;height:1px;background:#c8c8c8"></div>
<div style="position:absolute;left:887px;top:419px;width:1px;height:56px;background:#c8c8c8"></div>
<div style="position:absolute;left:947px;top:419px;width:1px;height:56px;background:#c8c8c8"></div>
<div style="position:absolute;left:1012px;top:419px;width:1px;height:56px;background:#c8c8c8"></div>
<div style="position:absolute;left:1077px;top:419px;width:1px;height:56px;background:#c8c8c8"></div>
<div style="position:absolute;left:1147px;top:419px;width:1px;height:56px;background:#c8c8c8"></div>
<div style="position:absolute;left:1217px;top:419px;width:1px;height:56px;background:#c8c8c8"></div>
<div style="position:absolute;left:1287px;top:419px;width:1px;height:56px;background:#c8c8c8"></div>
<div style="position:absolute;left:770px;top:419px;width:117px;height:29px;border:1px solid #7fb6cc;box-sizing:border-box;background:#eef2f5"></div>
<div class="t" style="left:774.5px;top:395.69px;font-size:11px;color:#fff;">Item Name</div>
<div class="t" style="left:892.3px;top:395.69px;font-size:11px;color:#fff;transform:scaleX(1.0387);transform-origin:left 0;">Unit</div>
<div class="t" style="left:956.3px;top:388.19px;font-size:11px;color:#fff;transform:scaleX(0.9545);transform-origin:left 0;">Request</div>
<div class="t" style="left:956.3px;top:402.19px;font-size:11px;color:#fff;transform:scaleX(1.0056);transform-origin:left 0;">Qty</div>
<div class="t" style="left:1018.8px;top:388.19px;font-size:11px;color:#fff;">Approve</div>
<div class="t" style="left:1018.8px;top:402.19px;font-size:11px;color:#fff;transform:scaleX(1.0056);transform-origin:left 0;">Qty</div>
<div class="t" style="left:1104.94px;top:395.69px;font-size:11px;color:#fff;transform:scaleX(0.9361);transform-origin:right 0;">Price</div>
<div class="t" style="left:1158.6px;top:388.19px;font-size:11px;color:#fff;transform:scaleX(1.0056);transform-origin:left 0;">Discount</div>
<div class="t" style="left:1158.6px;top:402.19px;font-size:11px;color:#fff;transform:scaleX(0.9579);transform-origin:left 0;">Per Qty</div>
<div class="t" style="left:1243.28px;top:395.69px;font-size:11px;color:#fff;transform:scaleX(0.9736);transform-origin:right 0;">Value</div>
<div class="t" style="left:1292.3px;top:395.69px;font-size:11px;color:#fff;transform:scaleX(0.9044);transform-origin:left 0;">PR No.</div>
<div style="position:absolute;left:771px;top:420px;width:115px;height:56px;overflow:hidden">
<div class="t" style="left:5px;top:8.19px;font-size:11px;color:#0a0a0a;transform:scaleX(0.8782);transform-origin:left 0;">CASA CONCEAL DOOR CLOSER</div>
<div class="t" style="left:5px;top:36.19px;font-size:11px;color:#0a0a0a;transform:scaleX(0.8782);transform-origin:left 0;">CASA CONCEAL DOOR CLOSER</div>
</div>
<div class="t" style="left:894px;top:428.19px;font-size:11px;color:#0a0a0a;transform:scaleX(0.9120);transform-origin:left 0;">NOS.NOS</div>
<div class="t" style="left:971.05px;top:428.19px;font-size:11px;color:#0a0a0a;transform:scaleX(0.9792);transform-origin:right 0;">10.000</div>
<div class="t" style="left:1035.95px;top:428.19px;font-size:11px;color:#0a0a0a;transform:scaleX(0.9792);transform-origin:right 0;">10.000</div>
<div class="t" style="left:1088.20px;top:428.19px;font-size:11px;color:#0a0a0a;transform:scaleX(0.9867);transform-origin:right 0;">2372.5000</div>
<div class="t" style="left:1176.35px;top:428.19px;font-size:11px;color:#0a0a0a;transform:scaleX(0.9792);transform-origin:right 0;">0.0000</div>
<div class="t" style="left:1234.32px;top:428.19px;font-size:11px;color:#0a0a0a;transform:scaleX(0.9849);transform-origin:right 0;">23725.00</div>
<div class="t" style="left:894px;top:456.19px;font-size:11px;color:#0a0a0a;transform:scaleX(0.9120);transform-origin:left 0;">NOS.NOS</div>
<div class="t" style="left:971.05px;top:456.19px;font-size:11px;color:#0a0a0a;transform:scaleX(0.9792);transform-origin:right 0;">10.000</div>
<div class="t" style="left:1035.95px;top:456.19px;font-size:11px;color:#0a0a0a;transform:scaleX(0.9792);transform-origin:right 0;">10.000</div>
<div class="t" style="left:1088.20px;top:456.19px;font-size:11px;color:#0a0a0a;transform:scaleX(0.9867);transform-origin:right 0;">2372.5000</div>
<div class="t" style="left:1176.35px;top:456.19px;font-size:11px;color:#0a0a0a;transform:scaleX(0.9792);transform-origin:right 0;">0.0000</div>
<div class="t" style="left:1234.32px;top:456.19px;font-size:11px;color:#0a0a0a;transform:scaleX(0.9849);transform-origin:right 0;">23725.00</div>
<div class="t" style="left:1294px;top:428.19px;font-size:11px;color:#0a0a0a;transform:scaleX(0.9868);transform-origin:left 0;">22/DR01303</div>
<div class="t" style="left:1294px;top:456.19px;font-size:11px;color:#0a0a0a;transform:scaleX(0.9868);transform-origin:left 0;">22/DR01488</div>
<div style="position:absolute;left:770px;top:632px;width:593px;height:1px;background:#d9d9d9"></div>
<div class="t" style="left:781px;top:639.19px;font-size:11px;color:#111;font-weight:bold;transform:scaleX(0.9766);transform-origin:left 0;">Sub Total</div>
<div class="t" style="left:1306.12px;top:639.19px;font-size:11px;color:#111;font-weight:bold;transform:scaleX(0.9808);transform-origin:right 0;">47450.00</div>
<div style="position:absolute;left:770px;top:659px;width:593px;height:1px;background:#d9d9d9"></div>
<div style="position:absolute;left:1035px;top:668px;width:75px;height:24px;background:#fff;border:1px solid #c2c2c2;border-radius:3px;box-sizing:border-box"></div>
<div class="t" style="left:1044.99px;top:675.19px;font-size:11px;color:#8a8a8a;transform:scaleX(0.9785);transform-origin:center 0;">Select Item</div>
<div style="position:absolute;left:2px;top:700px;width:1362px;height:1px;background:#111"></div>
<div style="position:absolute;left:2px;top:701px;width:1362px;height:24px;background:#78b9df"></div>
<div style="position:absolute;left:2px;top:725px;width:1362px;height:1px;background:#000"></div>
<div style="position:absolute;left:1318px;top:726px;width:22px;height:2px;background:#2a9edb"></div>
<div style="position:absolute;left:321px;top:701px;width:109px;height:24px;background:#fff;border:1px solid #c2c2c2;border-radius:3px;box-sizing:border-box"></div>
<div class="t" style="left:337.59px;top:708.19px;font-size:11px;color:#8a8a8a;transform:scaleX(0.9695);transform-origin:center 0;">Delete Request</div>
<div style="position:absolute;left:436px;top:701px;width:109px;height:24px;background:#fff;border:1px solid #c2c2c2;border-radius:3px;box-sizing:border-box"></div>
<div class="t" style="left:457.79px;top:708.19px;font-size:11px;color:#8a8a8a;transform:scaleX(0.9143);transform-origin:center 0;">Call Back PO</div>
<div style="position:absolute;left:551px;top:701px;width:109px;height:24px;background:#fff;border:1px solid #c2c2c2;border-radius:3px;box-sizing:border-box"></div>
<div class="t" style="left:559.94px;top:708.19px;font-size:11px;color:#8a8a8a;transform:scaleX(0.9730);transform-origin:center 0;">Send For Approval</div>
<div style="position:absolute;left:666px;top:701px;width:74px;height:24px;background:#fff;border:1px solid #c2c2c2;border-radius:3px;box-sizing:border-box"></div>
<div class="t" style="left:673.04px;top:708.19px;font-size:11px;color:#8a8a8a;transform:scaleX(0.9649);transform-origin:center 0;">Approve PO</div>
<div style="position:absolute;left:746px;top:701px;width:109px;height:24px;background:#fff;border:1px solid #c2c2c2;border-radius:3px;box-sizing:border-box"></div>
<div class="t" style="left:768.09px;top:708.19px;font-size:11px;color:#8a8a8a;transform:scaleX(0.9448);transform-origin:center 0;">Generate PO</div>
<div style="position:absolute;left:861px;top:701px;width:109px;height:24px;background:#b8dcef;border:1px solid #4d4d4d;border-radius:3px;box-sizing:border-box"></div>
<div class="t" style="left:894.72px;top:708.19px;font-size:11px;color:#0a0a0a;transform:scaleX(0.9522);transform-origin:center 0;">Print PO</div>
<div style="position:absolute;left:976px;top:701px;width:75px;height:24px;background:#b8dcef;border:1px solid #4d4d4d;border-radius:3px;box-sizing:border-box"></div>
<div class="t" style="left:989.04px;top:708.19px;font-size:11px;color:#0a0a0a;transform:scaleX(0.9611);transform-origin:center 0;">Show Log</div>
</body></html>
